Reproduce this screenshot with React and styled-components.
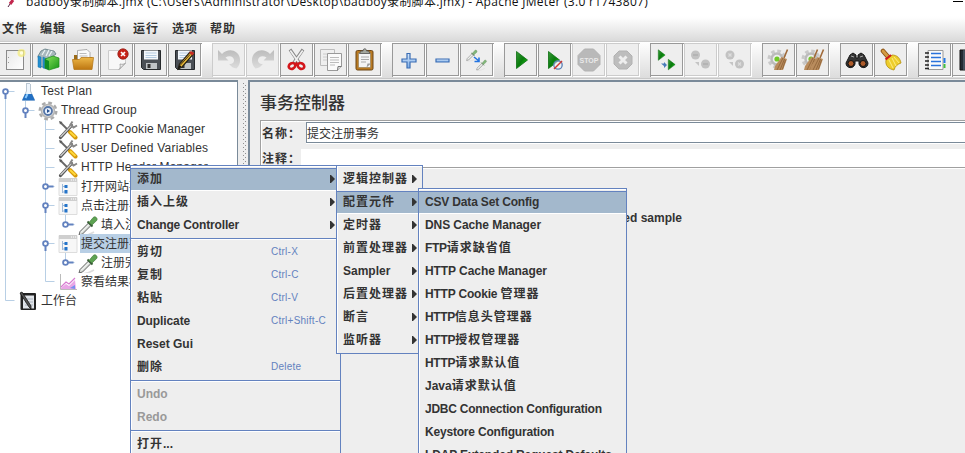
import React from "react";
import styled, { createGlobalStyle, css } from "styled-components";

const Global = createGlobalStyle`
  * { box-sizing: border-box; }
  html, body { margin: 0; height: 100%; overflow: hidden; background: #eee; }
  body { font-family: "Liberation Sans", "Noto Sans CJK SC", sans-serif; font-size: 12px; color: #333; }
  svg { display: block; flex: none; }
`;

const Han = styled.span`
  font-family: "Noto Sans CJK SC", sans-serif;
  font-size: ${(p) => p.$size}px;
  letter-spacing: ${(p) => p.$gap}px;
`;

function Text({ children, size = 12, gap = 1 }) {
  return children
    .split(/([\u4e00-\u9fff：]+)/)
    .filter(Boolean)
    .map((part, i) =>
      /[\u4e00-\u9fff：]/.test(part) ? (
        <Han key={i} $size={size} $gap={gap}>{part}</Han>
      ) : (
        <React.Fragment key={i}>{part}</React.Fragment>
      )
    );
}

/* ---------- window frame ---------- */
const Window = styled.div`
  position: relative;
  width: 965px;
  height: 453px;
  overflow: hidden;
  display: flex;
  flex-direction: column;
  background: #eee;
`;
const TitleBar = styled.div`
  height: 16px;
  flex: none;
  display: flex;
  justify-content: space-between;
  background: #fff;
`;
const TitleLeft = styled.div`
  display: flex;
  gap: 9px;
  padding-left: 5px;
`;
const TitleText = styled.div`
  margin-top: -8px;
  height: 20px;
  line-height: 20px;
  font-family: "Open Sans", "Noto Sans CJK SC", sans-serif;
  font-size: 12px;
  letter-spacing: 0.285px;
  color: #111;
  white-space: nowrap;
`;
const Minimise = styled.div`
  width: 10px;
  height: 1px;
  margin: 1px 2px 0 0;
  background: #000;
`;
const MenuBar = styled.div`
  height: 26px;
  flex: none;
  display: flex;
  gap: 13px;
  padding: 0 2px 1px;
  align-items: center;
  background: linear-gradient(#fff, #fdfdfd 10%, #dadada);
  border-bottom: 1px solid #ccc;
`;
const MenuTitle = styled.div`
  font-weight: 700;
  line-height: 24px;
  letter-spacing: -0.1px;
  width: ${(p) => p.$w}px;
  white-space: nowrap;
`;

/* ---------- toolbar ---------- */
const ToolBar = styled.div`
  height: 37px;
  flex: none;
  display: flex;
  gap: 10px;
  padding-top: 1px;
  margin-left: -2px;
  background: linear-gradient(#fff, #dcdcdc);
  border-bottom: 1px solid #c8c8c8;
`;
const ToolGroup = styled.div`
  display: flex;
  flex: none;
`;
const ToolButton = styled.div`
  width: 34px;
  height: 34px;
  border: 1px solid ${(p) => (p.$off ? "#ccc" : "#999")};
  border-right-width: 0;
  border-bottom-width: 0;
  padding: 4px;
  background: #eee;
  box-shadow: inset -1px -1px #fff, inset -2px -2px ${(p) => (p.$off ? "#ccc" : "#999")};
`;

const Glyph = ({ children, s = 24 }) => (
  <svg width={s} height={s} viewBox={`0 0 ${s} ${s}`} fill="none">{children}</svg>
);

const Gradients = () => (
  <svg width="0" height="0" aria-hidden="true">
    <defs>
      <linearGradient id="green" x2="1" y2="1"><stop stopColor="#3a9a3a" /><stop offset=".5" stopColor="#087c0c" /><stop offset="1" stopColor="#24d417" /></linearGradient>
      <linearGradient id="book" x2="1" y2="1"><stop stopColor="#8be35c" /><stop offset="1" stopColor="#159516" /></linearGradient>
      <linearGradient id="gold" x2="0" y2="1"><stop stopColor="#edb747" /><stop offset="1" stopColor="#bd7611" /></linearGradient>
      <linearGradient id="blue" x2="0" y2="1"><stop stopColor="#d8e8fa" /><stop offset="1" stopColor="#7daee8" /></linearGradient>
      <linearGradient id="page" x2="1" y2="1"><stop stopColor="#e8e8e8" /><stop offset="1" stopColor="#fff" /></linearGradient>
      <linearGradient id="curl" x2="0" y2="1"><stop stopColor="#bcbcbc" /><stop offset="1" stopColor="#dcdcdc" /></linearGradient>
    </defs>
  </svg>
);

const DefsHolder = styled.div`
  position: absolute;
  width: 0;
  height: 0;
`;

const Play = ({ x = 0, y = 0, k = 1 }) => (
  <path transform={`translate(${x} ${y}) scale(${k})`} d="M.5.5 11.5 9 .5 17.5Z" fill="url(#green)" stroke="#0b6e10" strokeWidth=".8" />
);
const Floppy = () => (
  <>
    <path d="M2.5 2.5h19v19h-17l-2-2z" fill="#4a4f55" stroke="#25282b" />
    <path d="M5 2.5h14v9H5z" fill="#f4f8fc" />
    <path d="M6.5 5h11M6.5 7.5h11M6.5 9.5h11" stroke="#b4cbe0" />
    <path d="M7 15h11v6H7z" fill="#bfc3c6" />
    <path d="M8.5 16h3v4h-3z" fill="#333" />
  </>
);
const Curl = ({ flip }) => (
  <g transform={flip ? "translate(24 0) scale(-1 1)" : undefined}>
    <path d="M1 2v10.500h10.500L8.500 9.500C12 7 16.500 8 17 12c.3 3-2.500 4.500-5 3.800 2.500 3 4 4.500 7.500 4.700 4.500-4 5-12 0-16C15 1 9 2 5 6z" fill="url(#curl)" />
  </g>
);
const Dropper = () => (
  <>
    <path d="M2 21c5 0 9-1 14-4" stroke="#ddd" strokeWidth="1.500" />
    <path d="M1 20 2 16.500 10.500 8l2.500 2.500L4.500 19z" fill="#d8ddd8" stroke="#666" strokeWidth="1" />
    <path d="m3 17.500 8-8" stroke="#fff" />
    <path d="m9.500 6.500 5 5" stroke="#335a30" strokeWidth="1.800" />
    <path d="m11 7.500 4.200-5c2-2 5 1 3.500 3L14 10z" fill="#5da352" stroke="#467c3f" strokeWidth=".7" />
  </>
);
const Gear = () => (
  <>
    <circle cx="10" cy="11" r="8" stroke="#c9c9c9" strokeWidth="3" strokeDasharray="3.6 2.683" />
    <circle cx="10" cy="11" r="5.500" fill="#eee" stroke="#bbb" strokeWidth="2.500" />
    <circle cx="10" cy="11" r="2.600" fill="#72c928" />
  </>
);
const Broom = ({ x = 0 }) => (
  <g transform={`translate(${x} 0)`}>
    <path d="M20.500 1.500 17 10" stroke="#a06a3a" strokeWidth="1.600" />
    <path d="M14.500 9 8 18l-1 4h9l4-11z" fill="#b98c5d" />
    <path d="m16 10-6 12m7.500-11-4.500 11m5.500-10-3 9" stroke="#8a5f35" strokeWidth=".8" />
  </g>
);
const StopWord = styled.text`
  font: 700 7px "Liberation Sans", sans-serif;
`;

const icons = {
  create: (<><rect x="3.500" y="2.500" width="17" height="19" fill="url(#page)" stroke="#8a8a8a" /><path d="M5.500 9v1M5.500 14v1" stroke="#999" /><circle cx="18.500" cy="5" r="4" fill="#f4ec7c" opacity=".75" /><circle cx="18.500" cy="5" r="1.700" fill="#fffde0" /></>),
  templates: (<><path d="m1 8 3-5 4-2 4 1 5 1 2 3-8 6v9l-8-3z" fill="#a8b8bd" stroke="#5e7880" strokeWidth=".8" /><path d="m5 7 3-5m1 6 3-6m0 6 3-5" stroke="#edf5f5" strokeWidth="1.200" /><path d="m1 8 3 1v11l-3-1zM6 9l4 2v10l-4-1z" fill="#238fd1" stroke="#1472aa" strokeWidth=".5" /><path d="m8 11 8-3 6 2v9l-10 3-4-2z" fill="url(#book)" stroke="#178d15" strokeWidth=".7" /><path d="m8 11 4 2v9l-4-2z" fill="#118d23" /></>),
  open: (<><path d="M3 7h6l1 2h11v10H3z" fill="#9b6b18" /><path d="M6.500 2.500 16 1.500l3 3V14H6.500z" fill="#fafafa" stroke="#999" strokeWidth=".8" /><path d="M8.500 5.500h7M8.500 8h8" stroke="#bbb" /><path d="M1.500 11.500h7l1.500-2h12.500l-1.500 12H3z" fill="url(#gold)" stroke="#b5781b" strokeWidth=".8" /></>),
  close: (<><path d="M3.500 2.500h17v13l-6 6h-11z" fill="#f8f8f8" stroke="#ccc" /><path d="M14 21.500c2-1.500 1-4 1-5.500 2 .5 4 .5 5.500-1z" fill="#ececec" stroke="#999" strokeWidth=".8" /><circle cx="18" cy="6" r="5.200" fill="#c62116" stroke="#942018" strokeWidth=".8" /><path d="m16 4 4 4m0-4-4 4" stroke="#fff" strokeWidth="1.700" /></>),
  save: <Floppy />,
  saveAs: (<><Floppy /><path d="m5 21 1.500-5L17 4l3 2.500L9 19z" fill="#edbd37" stroke="#272218" strokeWidth="1.200" /><path d="m16 5 2-2 3.500 2-2 2.500z" fill="#c62c22" /><path d="m7 17.500 10-11" stroke="#4c3612" /><path d="m5 21 1.500-4 2 1.500z" fill="#111" /></>),
  undo: <Curl />,
  redo: <Curl flip />,
  cut: (<><path d="m5 1.500 9 13M18 1.500l-9 13" stroke="#888" strokeWidth="3.200" /><path d="m5.300 2.500 8.200 11.500M17.700 2.500 9.500 14" stroke="#f1f1f1" strokeWidth="1.700" /><ellipse cx="7" cy="18" rx="3.400" ry="2.700" transform="rotate(-25 7 18)" stroke="#d3161b" strokeWidth="2.600" /><ellipse cx="16" cy="18" rx="3.400" ry="2.700" transform="rotate(25 16 18)" stroke="#d3161b" strokeWidth="2.600" /><path d="m9.500 16 2-2.500 2 2.500v2h-4z" fill="#d3161b" /></>),
  copy: (<><path d="M1.500 1.500h14v16h-14z" fill="#efefef" stroke="#bcbcbc" /><path d="M4 6h9M4 9h9M4 12h5" stroke="#ccc" /><path d="M8.500 5.500h14v13l-4 4h-10z" fill="#fafafa" stroke="#999" /><path d="M11 9.500h9M11 12h9M11 14.500h9M11 17h5" stroke="#bbb" /><path d="m18.500 22.500.5-4h3.500" fill="#ddd" stroke="#777" /></>),
  paste: (<><rect x="3" y="2.500" width="17" height="19.500" rx="1.500" fill="#b97a22" stroke="#6d4717" /><path d="M5.500 5h12v14.500h-12z" fill="#f4f4f4" stroke="#8f7950" strokeWidth=".6" /><path d="M8 9h8M8 11.500h8M8 14h5" stroke="#aaa" /><path d="m13.500 19.500 1-4h3.500z" fill="#999" /><path d="M6.500 5.500 8 3h2c0-3 3.500-3 3.500 0h2L17 5.500z" fill="#a4a79d" stroke="#555" strokeWidth=".8" /></>),
  plus: <path d="M10 5.500h3v5.500h6v3h-6v6h-3v-6H5v-3h5z" fill="url(#blue)" stroke="#3a6db4" strokeWidth="1.200" />,
  minus: <path d="M5 11h13v3H5z" fill="url(#blue)" stroke="#3a6db4" strokeWidth="1.200" />,
  toggle: (<><g transform="translate(1 1) scale(.58)" opacity=".75"><Dropper /></g><g transform="translate(11 11) scale(.55)" opacity=".75"><Dropper /></g><path d="m9 9 5 4m0-3.500v4H9.500" stroke="#2374e1" strokeWidth="1.600" /></>),
  start: <Play x="7" y="3" />,
  startNow: (<><Play x="5" y="3" /><circle cx="15" cy="17" r="4.200" fill="#eef3fa" fillOpacity=".6" stroke="#597fb5" strokeWidth="1.300" /><path d="m11 21 8-8" stroke="#d4372f" strokeWidth="1.500" /></>),
  stop: (<><path d="M7.500 1h9L23 7.500v9L16.500 23h-9L1 16.500v-9z" fill="#b9b9b9" stroke="#b2b2b2" /><StopWord x="12" y="14.600" textAnchor="middle" fill="#e9e9e9" textLength="19">STOP</StopWord></>),
  shutdown: (<><path d="M8 3h8l5 5v8l-5 5H8l-5-5V8z" fill="#bdbdbd" stroke="#b2b2b2" /><path d="m8.500 8.500 7 7m0-7-7 7" stroke="#eee" strokeWidth="3" /></>),
  remoteStart: (<><Play x="3" y="1.500" k=".62" /><Play x="13" y="11" k=".62" /><path d="M6 15.500h3v-1.500l3 3-3 3v-2z" fill="#497bb9" /></>),
  remoteStop: (<><circle cx="6.500" cy="7" r="4.500" fill="#c2c2c2" /><circle cx="16.500" cy="16" r="4.500" fill="#c2c2c2" /><path d="M4 7h5M14 16h5" stroke="#b0b0b0" strokeWidth="1.500" /><path d="M6 14h4v4z" fill="#c5c5c5" /></>),
  remoteShut: (<><circle cx="7" cy="7" r="4.500" fill="#c2c2c2" /><circle cx="16.500" cy="16" r="4.500" fill="#c2c2c2" /><path d="m5.500 5.500 3 3m0-3-3 3M15 14.500l3 3m0-3-3 3" stroke="#ddd" strokeWidth="1.200" /><path d="M6 14h4v4z" fill="#c5c5c5" /></>),
  clear: (<><Gear /><Broom /></>),
  clearAll: (<><Gear /><Broom x="-4" /><Broom x="2" /></>),
  find: (<><path d="m5 7 3-2 3 2v3h2V7l3-2 3 2 4 8c0 6-8 6-9 1v-3h-4v3c-1 5-9 5-9-1z" fill="#343434" stroke="#171717" /><path d="m6 8 3 1m6 0 3-1" stroke="#aaa" /><circle cx="6" cy="15.500" r="3" fill="#ad5b2a" stroke="#111" /><circle cx="18" cy="15.500" r="3" fill="#ad5b2a" stroke="#111" /></>),
  sweep: (<><path d="m4 3 6 7" stroke="#8c5313" strokeWidth="4.500" strokeLinecap="round" /><path d="m4 3 6 7" stroke="#d39c43" strokeWidth="2.800" strokeLinecap="round" /><path d="m7 12 6-5c5 0 8 3 9 8-3 1-6 3-7 7-5-1-9-4-8-10z" fill="#edcd2c" stroke="#b48f0c" strokeWidth=".8" /><path d="m10 12 4 8m-1-10 4 8m-2-9 5 6" stroke="#fff29a" strokeWidth=".8" /><path d="m6.500 11.500 5.500-4.500" stroke="#cf1a1a" strokeWidth="2.200" /></>),
  list: (<><path d="M5 2.500h15v19H5z" fill="#fafafa" stroke="#999" /><path d="M20.500 10h2v5h-2z" fill="#2277e4" /><path d="M20.500 16h2v4h-2z" fill="#43c03d" /><path d="M8 5.500h10M8 9.500h10M8 13.500h10M8 17.500h10" stroke="#2972db" strokeWidth="1.400" /><path d="M2 5h4M2 9h4M2 13h4M2 17h4M2 20.500h4" stroke="#222" strokeWidth="1.400" /></>),
  help: (<><path d="M3 2h19v20H3z" fill="#222b35" stroke="#111" /><path d="M7 2v20" stroke="#687886" /></>),
};

const toolGroups = [
  ["create", "templates", "open", "close", "save", "saveAs"],
  ["-undo", "-redo", "cut", "copy", "paste"],
  ["plus", "minus", "toggle"],
  ["start", "startNow", "-stop", "-shutdown"],
  ["remoteStart", "-remoteStop", "-remoteShut"],
  ["clear", "clearAll"],
  ["find", "sweep"],
  ["list", "help"],
];

/* ---------- split area ---------- */
const Split = styled.div`
  flex: 1;
  min-height: 0;
  display: flex;
  padding-top: 1px;
`;
const TreePane = styled.div`
  width: 238px;
  flex: none;
  border-top: 2px solid #7a8a99;
  border-right: 1px solid #7a8a99;
  background: #fff;
  overflow: hidden;
`;
const Divider = styled.div`
  width: 10px;
  flex: none;
  padding: 3px 2px 0 5px;
  background: #eee;
  &::before {
    content: "";
    display: block;
    height: 100%;
    background:
      conic-gradient(from 0deg at 1px 1px, transparent 75%, #8f8f8f 0) 0 0 / 4px 4px,
      conic-gradient(from 0deg at 1px 1px, transparent 75%, #8f8f8f 0) 2px 2px / 4px 4px;
  }
`;
const TreeRow = styled.div`
  height: 19px;
  display: flex;
  align-items: center;
`;
const TreeLabel = styled.div`
  height: 19px;
  line-height: ${(p) => (p.$han ? 17 : 19)}px;
  margin-left: 2px;
  padding: 0 1px;
  letter-spacing: ${(p) => p.$ls}px;
  white-space: nowrap;
  ${(p) => p.$selected && css`background: #b8cfe5;`}
`;

function Guides({ level, handle, through = [], last, first }) {
  const x = 5.5 + level * 20;
  return (
    <svg width={18 + level * 20} height="19" fill="none">
      <g stroke="#b8cfe5">
        {through.map((l) => <path key={l} d={`M${5.5 + l * 20} 0v19`} />)}
        <path d={`M${x} ${first ? 9 : 0}V${last ? 9.5 : 19}M${x} 9.5h9`} />
      </g>
      {handle && (
        <g stroke="#6382bf">
          <path d={handle === "open" ? `M${x} 11v6` : `M${x + 2} 9.5h6`} strokeWidth="2" />
          <circle cx={x} cy="9.500" r="2.400" fill="#fff" strokeWidth="1.800" />
        </g>
      )}
    </svg>
  );
}

const treeIcons = {
  flask: (<><path d="M8 1.500h4M8.500 2v7L4.500 18h12l-4-9V2" fill="#eef5fc" stroke="#b9c6d2" /><path d="m7 12-3 6.500h13L14 12z" fill="#226fc2" /><path d="m7.500 16 2-4" stroke="#8ccbff" strokeWidth="2" /></>),
  gear: (<><circle cx="10" cy="10" r="8.300" stroke="#aaa" strokeWidth="2.400" strokeDasharray="3.7 2.82" /><circle cx="10" cy="10" r="6.500" fill="#ddd" stroke="#b5b5b5" strokeWidth="1.500" /><circle cx="10" cy="10" r="4" fill="#e8f0fc" stroke="#5576a8" strokeWidth="1.800" /><path d="m9 8 3 2-3 2z" fill="#234f91" /></>),
  tools: (<><path d="m3 3 8 8" stroke="#666" strokeWidth="1.800" /><path d="m1 1 3.500 1L2 4.500z" fill="#555" /><path d="m12 12 5.500 5.500" stroke="#d69809" strokeWidth="4" strokeLinecap="round" /><path d="m12 12 5.500 5" stroke="#ffd83b" strokeWidth="2" /><path d="m2.500 17.500 11-12" stroke="#555" strokeWidth="3.200" strokeLinecap="round" /><path d="m2.500 17 11-11.500" stroke="#ccc" strokeWidth="1.400" /><path d="m14.500 1.500-2 3 3 3 3.500-2" stroke="#888" strokeWidth="2" /></>),
  controller: (<><path d="M1 1.500h18v17H1z" fill="#f7f7f7" stroke="#ddd" /><path d="M1 1h18v4H1z" fill="#cfcfcf" /><path d="M13 3h1m1 0h1m1 0h1" stroke="#fff" /><path d="M4.500 7v9M4.500 9.500h4M4.500 15h4" stroke="#9fb9d8" /><path d="M6.500 8h3v3h-3zM6.500 13h3v3.500h-3z" fill="#2474ca" /></>),
  dropper: <Dropper />,
  chart: (<><path d="M2.500 2v15.500H19" stroke="#bbb" /><path d="m3 16 5-4 3 2 6-6 1 9H3z" fill="#e9a6e6" /><path d="m3 15 5-5 3 2 6-6" stroke="#d77bd0" strokeWidth="1.200" /><path d="m12 16 5-3v4z" fill="#7690ee" /></>),
  bench: (<><rect x="2.500" y="2" width="15.500" height="17" rx="1" fill="#222" /><path d="M5 4.500h11v13H5z" fill="#e1e5ea" /><path d="M7 8h8m-8 3h8m-8 3h8" stroke="#aab3bd" /><path d="m2 2 2-1 9 14v3l-2-2z" fill="#555" stroke="#161616" strokeWidth=".8" /></>),
};

const rows = [
  { t: "Test Plan", i: "flask", level: 0, handle: "open", first: true, ls: 0.2 },
  { t: "Thread Group", i: "gear", level: 1, handle: "open", through: [0], last: true, ls: 0.08 },
  { t: "HTTP Cookie Manager", i: "tools", level: 2, through: [0], ls: 0.08 },
  { t: "User Defined Variables", i: "tools", level: 2, through: [0], ls: 0.22 },
  { t: "HTTP Header Manager", i: "tools", level: 2, through: [0], ls: 0.12 },
  { t: "打开网站事务", i: "controller", level: 2, handle: "shut", through: [0] },
  { t: "点击注册事务", i: "controller", level: 2, handle: "open", through: [0] },
  { t: "填入注册信息", i: "dropper", level: 3, handle: "shut", through: [0, 2], last: true },
  { t: "提交注册事务", i: "controller", level: 2, handle: "open", through: [0], selected: true },
  { t: "注册完成", i: "dropper", level: 3, handle: "shut", through: [0, 2], last: true },
  { t: "察看结果树", i: "chart", level: 2, through: [0], last: true },
  { t: "工作台", i: "bench", level: 0, last: true },
];

/* ---------- editor ---------- */
const Editor = styled.div`
  flex: 1;
  min-width: 0;
  border-top: 2px solid #7a8a99;
  border-left: 2px solid #7a8a99;
  padding: 9px 0 0 10px;
`;
const Heading = styled.div`
  height: 29px;
  line-height: 22px;
  font-weight: 500;
`;
const Fields = styled.div`
  height: 48px;
  border: 1px solid #a0a0a0;
  border-right: 0;
  box-shadow: inset 1px 1px #fff, 0 1px #fff;
  padding: 1px 0 0 1px;
  display: flex;
  flex-direction: column;
  gap: 6px;
`;
const Field = styled.div`
  display: flex;
  height: ${(p) => p.$h}px;
  line-height: ${(p) => p.$h}px;
`;
const FieldLabel = styled.div`
  width: ${(p) => p.$w}px;
  flex: none;
  font-weight: 700;
  white-space: nowrap;
`;
const Input = styled.div`
  flex: 1;
  background: #fff;
  line-height: 19px;
  ${(p) => p.$framed && css`border: 1px solid #7a8a99; border-right: 0; box-shadow: 0 1px #fff;`}
`;
const Option = styled.div`
  width: 422px;
  margin-top: 39px;
  line-height: 22px;
  text-align: right;
  font-weight: 700;
`;

/* ---------- popup menus ---------- */
const Popup = styled.div`
  position: absolute;
  left: ${(p) => p.$x}px;
  top: ${(p) => p.$y}px;
  width: ${(p) => p.$w}px;
  border: 1px solid #6382bf;
  padding: 2px 0 1px;
  background: #eee;
  box-shadow: inset 1px 1px #fff;
`;
const Arrow = styled.svg.attrs({ width: 6, height: 10 })`
  margin-top: 6px;
`;
const ItemLabel = styled.span`
  line-height: 22px;
  ${Han} { line-height: 0; }
`;
const Item = styled.div`
  height: 23px;
  display: grid;
  grid-template-columns: ${(p) => (p.$keys ? "134px 1fr" : "1fr")} 8px;
  align-items: start;
  padding: 0 2px 0 6px;
  font-weight: 700;
  letter-spacing: ${(p) => p.$ls}px;
  white-space: nowrap;
  color: ${(p) => (p.$off ? "#999" : "#333")};
  ${(p) => p.$active && css`
    background: #a3b8cc;
    border-top: 1px solid #6382bf;
    border-bottom: 1px solid #fff;
    ${ItemLabel} { line-height: 20px; }
    ${Arrow} { margin-top: 5px; }
  `}
`;
const Keys = styled.span`
  line-height: 22px;
  height: 20px;
  font-size: 10px;
  font-weight: 400;
  letter-spacing: 0.25px;
  color: #6382bf;
`;
const Separator = styled.div`
  height: 4px;
  border-top: 1px solid #eee;
  border-bottom: 1px solid #eee;
  background: linear-gradient(#6382bf 50%, #fff 50%);
`;

const contextMenu = [
  { t: "添加", sub: true, active: true },
  { t: "插入上级", sub: true },
  { t: "Change Controller", sub: true, ls: -0.15 },
  null,
  { t: "剪切", k: "Ctrl-X" },
  { t: "复制", k: "Ctrl-C" },
  { t: "粘贴", k: "Ctrl-V" },
  { t: "Duplicate", k: "Ctrl+Shift-C", ls: -0.1 },
  { t: "Reset Gui" },
  { t: "删除", k: "Delete" },
  null,
  { t: "Undo", off: true },
  { t: "Redo", off: true },
  null,
  { t: "打开..." },
];
const addMenu = ["逻辑控制器", "配置元件", "定时器", "前置处理器", "Sampler", "后置处理器", "断言", "监听器"].map(
  (t) => ({ t, sub: true, active: t === "配置元件" })
);
const configMenu = [
  ["CSV Data Set Config", -0.17],
  ["DNS Cache Manager", -0.08],
  ["FTP请求缺省值", -0.3],
  ["HTTP Cache Manager", -0.07],
  ["HTTP Cookie 管理器", -0.2],
  ["HTTP信息头管理器", -0.4],
  ["HTTP授权管理器", -0.3],
  ["HTTP请求默认值", -0.3],
  ["Java请求默认值", 0],
  ["JDBC Connection Configuration", -0.25],
  ["Keystore Configuration", -0.19],
  ["LDAP Extended Request Defaults", -0.15],
].map(([t, ls], i) => ({ t, ls, active: i === 0 }));

function Menu({ x, y, w, items, keys }) {
  return (
    <Popup $x={x} $y={y} $w={w}>
      {items.map((it, i) =>
        it ? (
          <Item key={i} $active={it.active} $off={it.off} $keys={keys} $ls={it.ls || 0}>
            <ItemLabel><Text>{it.t}</Text></ItemLabel>
            {keys && <Keys>{it.k}</Keys>}
            {it.sub && <Arrow><path d="M0 1h1l4 4-4 4H0z" fill="#333" /></Arrow>}
          </Item>
        ) : (
          <Separator key={i} />
        )
      )}
    </Popup>
  );
}

const menuTitles = [["文件", 25], ["编辑", 28], ["Search", 39], ["运行", 26], ["选项", 25], ["帮助", 26]];

export default function App() {
  return (
    <>
      <Global />
      <Window>
        <DefsHolder><Gradients /></DefsHolder>
        <TitleBar>
          <TitleLeft>
            <svg width="12" height="10" fill="none"><path d="m8 0-3 4" stroke="#c2264d" strokeWidth="3" /><path d="m5 4-2 3" stroke="#552040" /></svg>
            <TitleText>
              {"badboy录制脚本.jmx (C:\\Users\\Administrator\\Desktop\\badboy录制脚本.jmx) - Apache JMeter (3.0 r1743807)"}
            </TitleText>
          </TitleLeft>
          <Minimise />
        </TitleBar>
        <MenuBar>
          {menuTitles.map(([t, w]) => <MenuTitle key={t} $w={w}><Text>{t}</Text></MenuTitle>)}
        </MenuBar>
        <ToolBar>
          {toolGroups.map((group, g) => (
            <ToolGroup key={g}>
              {group.map((name) => {
                const off = name[0] === "-";
                return (
                  <ToolButton key={name} $off={off}>
                    <Glyph>{icons[off ? name.slice(1) : name]}</Glyph>
                  </ToolButton>
                );
              })}
            </ToolGroup>
          ))}
        </ToolBar>
        <Split>
          <TreePane>
            {rows.map((r, i) => (
              <TreeRow key={i}>
                <Guides {...r} />
                <Glyph s={20}>{treeIcons[r.i]}</Glyph>
                <TreeLabel $selected={r.selected} $ls={r.ls || 0} $han={r.ls === undefined}>
                  <Text gap={0}>{r.t}</Text>
                </TreeLabel>
              </TreeRow>
            ))}
          </TreePane>
          <Divider />
          <Editor>
            <Heading><Text size={17} gap={0}>事务控制器</Text></Heading>
            <Fields>
              <Field $h={21}>
                <FieldLabel $w={44}><Text>名称：</Text></FieldLabel>
                <Input $framed><Text gap={0}>提交注册事务</Text></Input>
              </Field>
              <Field $h={18}>
                <FieldLabel $w={39}><Text>注释：</Text></FieldLabel>
                <Input />
              </Field>
            </Fields>
            <Option>generated sample</Option>
          </Editor>
        </Split>
        <Menu x={130} y={165} w={211} items={contextMenu} keys />
        <Menu x={336} y={165} w={87} items={addMenu} />
        <Menu x={418} y={188} w={209} items={configMenu} />
      </Window>
    </>
  );
}
